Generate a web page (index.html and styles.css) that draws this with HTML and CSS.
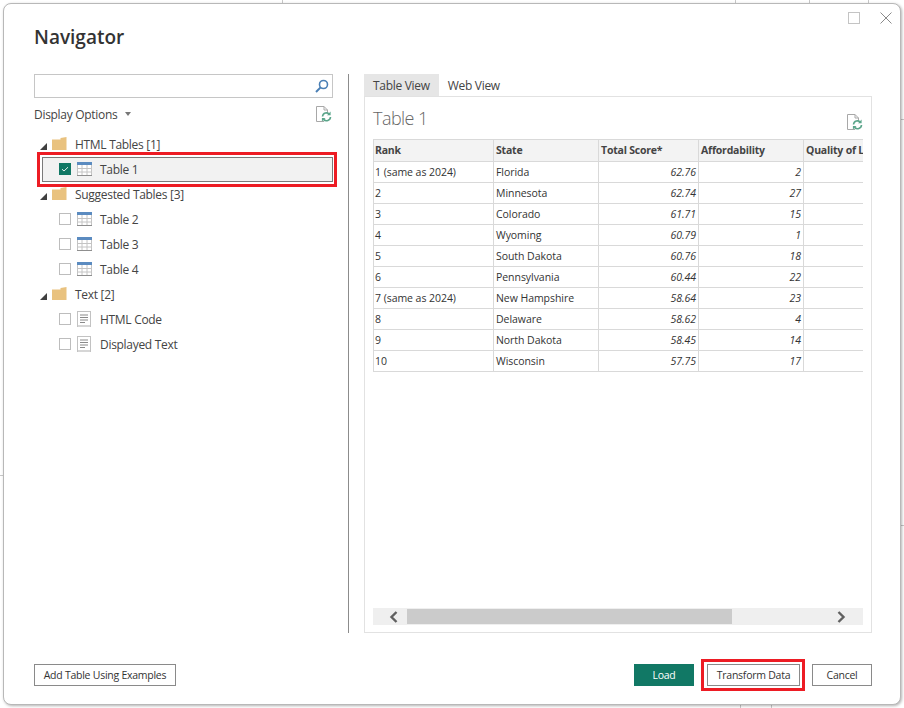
FILE: index.html
```html
<!DOCTYPE html>
<html lang="en">
<head>
<meta charset="utf-8">
<title>Navigator</title>
<link rel="stylesheet" href="styles.css">
</head>
<body>
<svg width="0" height="0" class="defs">
  <symbol id="folder" viewBox="0 0 15 13"><path d="M0 2.5 L8.5 2.5 L8.5 1 L14.5 0 L14.5 13 L0 13 Z" fill="#e9c27f"/></symbol>
  <symbol id="table" viewBox="0 0 15 14"><rect x="0.5" y="0.5" width="14" height="13" fill="#fff" stroke="#c4c4c4"/><rect x="0" y="0" width="15" height="3" fill="#5b8bc0"/><path d="M5 3v10M10 3v10M1 6.5h13M1 10h13" stroke="#c4c4c4" fill="none"/><path d="M0 13.5h15" stroke="#8f8f8f"/></symbol>
  <symbol id="doc" viewBox="0 0 14 16"><rect x="0.5" y="0.5" width="13" height="15" fill="#fff" stroke="#c2c2c2"/><path d="M1 15h12" stroke="#d6d6d6" stroke-width="2"/><path d="M3 4h8M3 6.5h8M3 9h8M3 11.5h5" stroke="#8a8a8a" fill="none"/></symbol>
  <symbol id="refresh" viewBox="0 0 16 16"><path d="M8 15.5H0.5V0.5H8L11.5 4V7M8 0.5V4H11.5" fill="#fff" stroke="#a8a8a8"/><path d="M6.5 10.5a4 4 0 0 1 7-2.2M14.5 11a4 4 0 0 1-7 2.4" fill="none" stroke="#5aa58a" stroke-width="1.6"/><path d="M14.6 5.6V9.2H11ZM5.9 15.6V12H9.5Z" fill="#5aa58a"/></symbol>
  <symbol id="tri" viewBox="0 0 7 7"><path d="M7 0V7H0Z" fill="#404040"/></symbol>
  <symbol id="check" viewBox="0 0 12 12"><rect width="12" height="12" fill="#117865"/><path d="M3 6.2L5 8L9 4.2" fill="none" stroke="#e8f2ef" stroke-width="1"/></symbol>
</svg>

<svg class="backdrop" width="904" height="708">
  <path d="M282.5 0V4M735.5 0V4M809.5 0V4M868.5 0V4M740.5 704V708M771.5 704V708M0 475.5H3M901 119.5H904M901 525.5H904" stroke="#c8c8c8" fill="none"/>
</svg>

<main class="window">
  <div class="controls">
    <span class="max"></span>
    <svg class="close" width="12" height="12" viewBox="0 0 12 12"><path d="M0.5 0.5L11.5 11.5M11.5 0.5L0.5 11.5" stroke="#8a8a8a" fill="none"/></svg>
  </div>
  <h1 class="title">Navigator</h1>

  <div class="body">
    <section class="left">
      <div class="search">
        <svg width="14" height="14" viewBox="0 0 14 14"><circle cx="8.5" cy="5.5" r="4" fill="none" stroke="#4a7fb5" stroke-width="1.6"/><path d="M5.6 8.4L1 13" stroke="#4a7fb5" stroke-width="2" fill="none"/></svg>
      </div>
      <div class="options">
        <span class="options-label">Display Options</span>
        <span class="caret"></span>
        <svg class="options-refresh" width="16" height="16"><use href="#refresh"/></svg>
      </div>
      <ul class="tree">
        <li class="group"><svg class="tri" width="7" height="7"><use href="#tri"/></svg><svg class="folder" width="15" height="13"><use href="#folder"/></svg><span>HTML Tables [1]</span></li>
        <li class="item selected"><svg class="box" width="12" height="12"><use href="#check"/></svg><svg class="ico" width="15" height="14"><use href="#table"/></svg><span>Table 1</span></li>
        <li class="group"><svg class="tri" width="7" height="7"><use href="#tri"/></svg><svg class="folder" width="15" height="13"><use href="#folder"/></svg><span>Suggested Tables [3]</span></li>
        <li class="item"><span class="box empty"></span><svg class="ico" width="15" height="14"><use href="#table"/></svg><span>Table 2</span></li>
        <li class="item"><span class="box empty"></span><svg class="ico" width="15" height="14"><use href="#table"/></svg><span>Table 3</span></li>
        <li class="item"><span class="box empty"></span><svg class="ico" width="15" height="14"><use href="#table"/></svg><span>Table 4</span></li>
        <li class="group"><svg class="tri" width="7" height="7"><use href="#tri"/></svg><svg class="folder" width="15" height="13"><use href="#folder"/></svg><span>Text [2]</span></li>
        <li class="item"><span class="box empty"></span><svg class="ico" width="14" height="16"><use href="#doc"/></svg><span class="doc-label">HTML Code</span></li>
        <li class="item"><span class="box empty"></span><svg class="ico" width="14" height="16"><use href="#doc"/></svg><span class="doc-label">Displayed Text</span></li>
      </ul>
    </section>

    <div class="divider"></div>

    <section class="right">
      <div class="tabs">
        <span class="tab active">Table View</span>
        <span class="tab">Web View</span>
      </div>
      <div class="panel">
        <div class="panel-head">
          <h2 class="panel-title">Table 1</h2>
          <svg width="16" height="16"><use href="#refresh"/></svg>
        </div>
        <div class="clip">
          <table class="data">
            <colgroup><col class="c1"><col class="c2"><col class="c3"><col class="c4"><col class="c5"></colgroup>
            <thead><tr><th>Rank</th><th>State</th><th>Total Score*</th><th>Affordability</th><th>Quality of Life</th></tr></thead>
            <tbody>
              <tr><td>1 (same as 2024)</td><td>Florida</td><td class="n">62.76</td><td class="n">2</td><td></td></tr>
              <tr><td>2</td><td>Minnesota</td><td class="n">62.74</td><td class="n">27</td><td></td></tr>
              <tr><td>3</td><td>Colorado</td><td class="n">61.71</td><td class="n">15</td><td></td></tr>
              <tr><td>4</td><td>Wyoming</td><td class="n">60.79</td><td class="n">1</td><td></td></tr>
              <tr><td>5</td><td>South Dakota</td><td class="n">60.76</td><td class="n">18</td><td></td></tr>
              <tr><td>6</td><td>Pennsylvania</td><td class="n">60.44</td><td class="n">22</td><td></td></tr>
              <tr><td>7 (same as 2024)</td><td>New Hampshire</td><td class="n">58.64</td><td class="n">23</td><td></td></tr>
              <tr><td>8</td><td>Delaware</td><td class="n">58.62</td><td class="n">4</td><td></td></tr>
              <tr><td>9</td><td>North Dakota</td><td class="n">58.45</td><td class="n">14</td><td></td></tr>
              <tr><td>10</td><td>Wisconsin</td><td class="n">57.75</td><td class="n">17</td><td></td></tr>
            </tbody>
          </table>
        </div>
        <div class="scrollbar">
          <svg class="arrow" width="10" height="12" viewBox="0 0 10 12"><path d="M7.5 1L2.5 6L7.5 11" fill="none" stroke="#606060" stroke-width="2.4"/></svg>
          <div class="thumb"></div>
          <svg class="arrow arrow-r" width="10" height="12" viewBox="0 0 10 12"><path d="M2.5 1L7.5 6L2.5 11" fill="none" stroke="#606060" stroke-width="2.4"/></svg>
        </div>
      </div>
    </section>
  </div>

  <footer class="footer">
    <button class="btn">Add Table Using Examples</button>
    <span class="spacer"></span>
    <button class="btn primary">Load</button>
    <button class="btn transform">Transform Data</button>
    <button class="btn cancel">Cancel</button>
  </footer>
</main>

<div class="mark mark-tree"></div>
<div class="mark mark-btn"></div>
</body>
</html>
```
FILE: styles.css
```css
* { box-sizing: border-box; }
html, body { margin: 0; padding: 0; }
body {
  width: 904px;
  height: 708px;
  overflow: hidden;
  background: #fff;
  position: relative;
  font-family: "Open Sans", "Noto Sans", sans-serif;
  font-size: 12px;
  color: #333;
  padding: 3px 0 0 3px;
}
.defs { position: absolute; }
.backdrop { position: absolute; left: 0; top: 0; }

.window {
  position: relative;
  width: 898px;
  height: 702px;
  background: #fff;
  border: 1px solid #b8b8b8;
  border-radius: 8px;
  box-shadow: 1px 1px 3px rgba(0,0,0,.3);
  padding: 0 28px 0 30px;
}

.controls {
  display: flex;
  justify-content: flex-end;
  align-items: flex-start;
  gap: 20px;
  height: 19px;
  padding-top: 8px;
  margin-right: -20px;
}
.max { width: 12px; height: 12px; border: 1px solid #c4c4c4; }
.close { display: block; }

.title {
  margin: 0 0 23px;
  height: 28px;
  line-height: 28px;
  font-size: 19px;
  font-weight: 600;
  color: #333;
}

.body { display: flex; height: 559px; }
.left { width: 299px; flex: none; }
.divider { width: 1px; margin: 0 15px; background: #8c8c8c; flex: none; }
.right { flex: 1; display: flex; flex-direction: column; min-width: 0; }

.search {
  height: 24px;
  border: 1px solid #c6c6c6;
  display: flex;
  justify-content: flex-end;
  align-items: center;
  padding-right: 3px;
}
.options {
  display: flex;
  align-items: center;
  height: 22px;
  margin-top: 5px;
}
.options-label { font-size: 12px; color: #444; letter-spacing: -0.3px; }
.caret {
  width: 0; height: 0;
  margin-left: 8px;
  border-left: 3.5px solid transparent;
  border-right: 3.5px solid transparent;
  border-top: 4px solid #777;
}
.options-refresh { margin-left: auto; margin-right: 1px; }

.tree { list-style: none; margin: 7px 0 0; padding: 0; }
.tree li { height: 25px; display: flex; align-items: center; font-size: 12px; letter-spacing: -0.3px; color: #444; }
.group { padding-left: 6px; }
.tri { margin-top: 3px; flex: none; }
.folder { margin: -2px 0 0 5px; flex: none; }
.group span { margin-left: 8px; }
.item { padding-left: 25px; }
.item .box { flex: none; margin-top: -1px; }
.box.empty { width: 12px; height: 12px; border: 1px solid #bdbdbd; display: block; }
.ico { margin: -1px 0 0 6px; flex: none; }
.item span:last-child { margin-left: 8px; }
.item span.doc-label { margin-left: 9px; }
.selected {
  margin-left: 8px;
  padding-left: 16px;
  border: 1px solid #7a7a7a;
  background: #f2f2f2;
}

.tabs { display: flex; height: 22px; flex: none; }
.tab { line-height: 24px; padding: 0 9px; font-size: 12px; letter-spacing: -0.3px; color: #444; }
.tab.active { background: #e6e6e6; }
.panel {
  flex: 1;
  border: 1px solid #e2e2e2;
  padding: 0 8px 7px;
  display: flex;
  flex-direction: column;
  min-height: 0;
}
.panel-head {
  flex: none;
  height: 42px;
  display: flex;
  align-items: center;
  justify-content: space-between;
}
.panel-head svg { margin-top: 8px; }
.panel-title { margin: 0; font-size: 18px; font-weight: 300; letter-spacing: -0.55px; color: #666; }

.clip { overflow: hidden; flex: none; }
.data {
  table-layout: fixed;
  width: 536px;
  border-collapse: separate;
  border-spacing: 0;
  font-size: 10.5px;
  color: #333;
  letter-spacing: -0.05px;
}
.c1 { width: 121px; } .c2 { width: 105px; } .c3 { width: 100px; } .c4 { width: 105px; } .c5 { width: 105px; }
.data th, .data td {
  border-right: 1px solid #d9d9d9;
  border-bottom: 1px solid #d9d9d9;
  padding: 0 2px;
  white-space: nowrap;
  overflow: hidden;
  height: 21px;
  text-align: left;
}
.data th {
  height: 23px;
  padding-bottom: 2px;
  background: #f3f3f3;
  border-top: 1px solid #d9d9d9;
  font-weight: 700;
  color: #444;
  letter-spacing: -0.2px;
}
.data th:first-child, .data td:first-child { border-left: 1px solid #d9d9d9; padding-left: 1px; }
.data td.n { text-align: right; font-style: italic; }

.scrollbar {
  margin-top: auto;
  height: 17px;
  flex: none;
  background: #efefef;
  display: flex;
  align-items: center;
  padding-left: 16px;
}
.thumb { width: 325px; height: 15px; margin-left: 8px; background: #cbcbcb; }
.arrow-r { margin-left: auto; margin-right: 17px; }

.footer { display: flex; align-items: center; height: 22px; margin-top: 31px; }
.spacer { flex: 1; }
.btn {
  height: 22px;
  border: 1px solid #8a8a8a;
  background: #fff;
  font: 10.5px "Open Sans", "Noto Sans", sans-serif;
  color: #333;
  padding: 0;
  letter-spacing: -0.25px;
}
.footer .btn:first-child { width: 142px; }
.primary { width: 60px; background: #117865; border-color: #117865; color: #fff; }
.transform { width: 93px; margin-left: 13px; }
.cancel { width: 60px; margin-left: 12px; }

.mark { position: absolute; border: 3px solid #ed1c24; pointer-events: none; }
.mark-tree { left: 37px; top: 152px; width: 300px; height: 35px; }
.mark-btn { left: 701px; top: 659px; width: 104px; height: 32px; }
```
